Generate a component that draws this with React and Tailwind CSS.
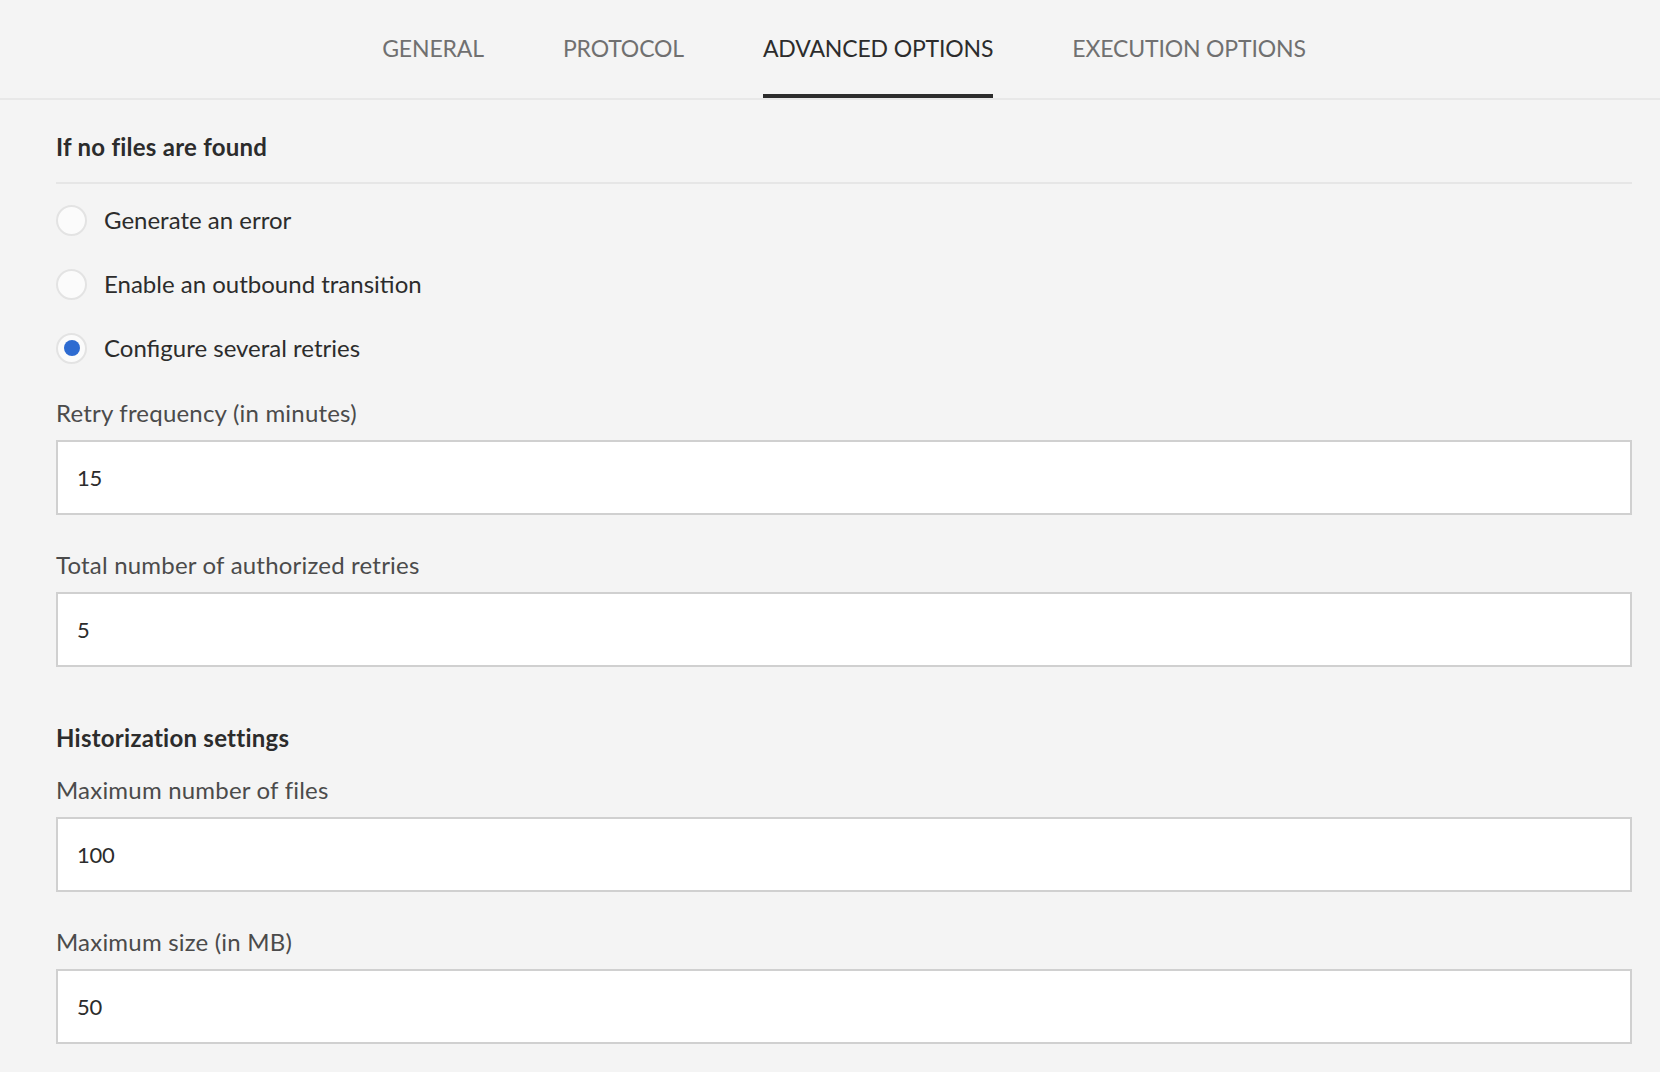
import React from "react";

const tabs = ["GENERAL", "PROTOCOL", "ADVANCED OPTIONS", "EXECUTION OPTIONS"];

function Radio({ checked, label }) {
  return (
    <div className="flex h-[64px] items-center">
      <span className="flex h-[31px] w-[31px] items-center justify-center rounded-full border-2 border-[#e3e3e3] bg-[#fbfbfb]">
        {checked && <span className="h-[16px] w-[16px] rounded-full bg-[#2d6bd1]" />}
      </span>
      <span className="ml-[17px] text-[24px] leading-[28px] text-[#2c2c2c]">{label}</span>
    </div>
  );
}

function Field({ label, value, className = "" }) {
  return (
    <div className={className}>
      <div className="text-[24px] leading-[28px] tracking-[0.2px] text-[#4b4b4b]">{label}</div>
      <div className="mt-[13px] flex h-[75px] items-center border-2 border-[#d0d0d0] bg-white pl-[19px] text-[22px] leading-[28px] tracking-[-0.3px] text-[#2c2c2c]">
        {value}
      </div>
    </div>
  );
}

export default function App() {
  return (
    <div className="min-h-screen bg-[#f4f4f4]" style={{ fontFamily: "Lato, 'Open Sans', sans-serif" }}>
      <div className="flex h-[100px] justify-center gap-[79px] border-b-2 border-[#e8e8e8] pl-[28px]">
        {tabs.map((t) => {
          const active = t === "ADVANCED OPTIONS";
          return (
            <div key={t} className="flex flex-col">
              <div className={`pt-[34px] text-[23px] leading-[28px] tracking-[-0.15px] ${active ? "text-[#2c2c2c]" : "text-[#707070]"}`}>{t}</div>
              <div className={`mt-auto h-[4px] ${active ? "bg-[#2c2c2c]" : ""}`} />
            </div>
          );
        })}
      </div>
      <div className="pl-[56px] pr-[28px]">
        <div className="pt-[33px] text-[24px] font-bold leading-[28px] tracking-[0.25px] text-[#2c2c2c]">If no files are found</div>
        <div className="mt-[21px] h-[2px] bg-[#e6e6e6]" />
        <div className="mt-[4px]">
          <Radio label="Generate an error" />
          <Radio label="Enable an outbound transition" />
          <Radio checked label="Configure several retries" />
        </div>
        <Field className="mt-[19px]" label="Retry frequency (in minutes)" value="15" />
        <Field className="mt-[36px]" label="Total number of authorized retries" value="5" />
        <div className="mt-[57px] text-[24px] font-bold leading-[28px] tracking-[0.25px] text-[#2c2c2c]">Historization settings</div>
        <Field className="mt-[24px]" label="Maximum number of files" value="100" />
        <Field className="mt-[36px]" label="Maximum size (in MB)" value="50" />
      </div>
    </div>
  );
}
